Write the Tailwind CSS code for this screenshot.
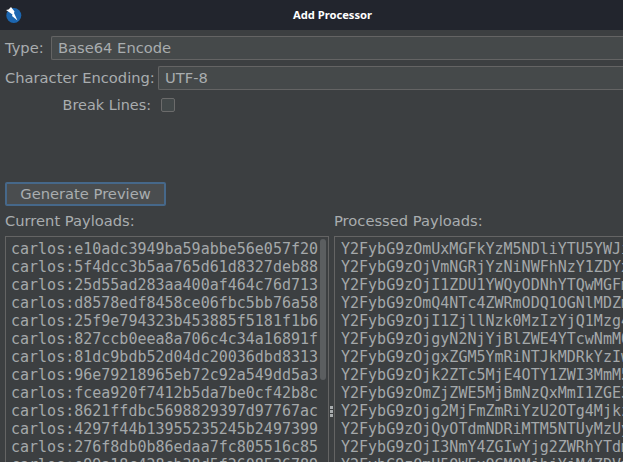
<!DOCTYPE html>
<html lang="en">
<head>
    <meta charset="UTF-8">
    <title>Add Processor</title>
    <script src="https://cdn.jsdelivr.net/npm/@tailwindcss/browser@4"></script>
</head>
<body class="relative bg-[#3c3f41] w-[623px] h-[462px] overflow-hidden font-['DejaVu_Sans',sans-serif] text-[14.7px] text-[#a9adaf]">
    <!-- title bar -->
    <div class="relative h-[30px] bg-[#22252d] flex items-center justify-center pl-[42px]">
        <svg class="absolute left-[6px] top-[7px]" width="16" height="16" viewBox="6 7 16 16">
            <circle cx="13.8" cy="15.5" r="7.5" fill="#1c66b0"/>
            <path d="M11 7 L14.5 11.5 L14 13 L17.5 20.5 L12 16 L12.5 14.5 L6 10 L8.5 9.5 Z" fill="#fff"/>
        </svg>
        <span class="font-['Noto_Sans',sans-serif] font-bold text-[11.2px] text-white">Add Processor</span>
    </div>

    <div class="pl-[5px]">
        <div class="flex items-center h-[24px] mt-[6px] whitespace-nowrap">
            <span class="w-[46px] shrink-0">Type:</span>
            <div class="flex-1 h-full bg-[#45494a] border border-r-0 border-[#646464] rounded-l-[2px] px-[6px] flex items-center">Base64 Encode</div>
        </div>
        <div class="flex items-center h-[24px] mt-[6px] whitespace-nowrap">
            <span class="w-[153px] shrink-0">Character Encoding:</span>
            <div class="flex-1 h-full bg-[#45494a] border border-r-0 border-[#646464] rounded-l-[2px] px-[6px] flex items-center">UTF-8</div>
        </div>
        <div class="flex items-center h-[14px] mt-[8px] whitespace-nowrap">
            <span class="w-[146px] shrink-0 pt-[2px] text-right text-[14.4px]">Break Lines:</span>
            <div class="ml-[10px] w-[14px] h-[14px] bg-[#43494a] border border-[#6b6b6b] rounded-[2px]"></div>
        </div>

        <button class="mt-[70px] w-[161px] h-[24px] leading-[18px] block bg-[#4a4d4f] border-2 border-[#46688a] rounded-[2px] text-[#a9adaf]">Generate Preview</button>

        <div class="grid grid-cols-[324px_1fr] gap-x-[5px] mt-[6px]">
            <div class="h-[18px] leading-[18px]">Current Payloads:</div>
            <div class="h-[18px] leading-[18px] whitespace-nowrap">Processed Payloads:</div>

            <div class="relative mt-[6px] h-[226px] border border-b-0 border-[#646464] pl-[5px] pt-[3px] font-['DejaVu_Sans_Mono',monospace] text-[15px] leading-[18px] text-[#a4a8aa] overflow-hidden whitespace-nowrap">
                <div>carlos:e10adc3949ba59abbe56e057f20</div>
                <div>carlos:5f4dcc3b5aa765d61d8327deb88</div>
                <div>carlos:25d55ad283aa400af464c76d713</div>
                <div>carlos:d8578edf8458ce06fbc5bb76a58</div>
                <div>carlos:25f9e794323b453885f5181f1b6</div>
                <div>carlos:827ccb0eea8a706c4c34a16891f</div>
                <div>carlos:81dc9bdb52d04dc20036dbd8313</div>
                <div>carlos:96e79218965eb72c92a549dd5a3</div>
                <div>carlos:fcea920f7412b5da7be0cf42b8c</div>
                <div>carlos:8621ffdbc5698829397d97767ac</div>
                <div>carlos:4297f44b13955235245b2497399</div>
                <div>carlos:276f8db0b86edaa7fc805516c85</div>
                <div>carlos:e99a18c428cb38d5f2608536789</div>
                <div class="absolute right-[2px] top-[2px] w-[6px] h-[141px] rounded-[3px] bg-[#5b5e60]"></div>
            </div>

            <div class="relative mt-[6px] h-[226px] border border-b-0 border-r-0 border-[#646464] pl-[6px] pt-[3px] font-['DejaVu_Sans_Mono',monospace] text-[15px] leading-[18px] text-[#a4a8aa] overflow-hidden whitespace-nowrap">
                <div>Y2FybG9zOmUxMGFkYzM5NDliYTU5YWJi</div>
                <div>Y2FybG9zOjVmNGRjYzNiNWFhNzY1ZDYx</div>
                <div>Y2FybG9zOjI1ZDU1YWQyODNhYTQwMGFm</div>
                <div>Y2FybG9zOmQ4NTc4ZWRmODQ1OGNlMDZm</div>
                <div>Y2FybG9zOjI1ZjllNzk0MzIzYjQ1Mzg4</div>
                <div>Y2FybG9zOjgyN2NjYjBlZWE4YTcwNmM0</div>
                <div>Y2FybG9zOjgxZGM5YmRiNTJkMDRkYzIw</div>
                <div>Y2FybG9zOjk2ZTc5MjE4OTY1ZWI3MmM5</div>
                <div>Y2FybG9zOmZjZWE5MjBmNzQxMmI1ZGE3</div>
                <div>Y2FybG9zOjg2MjFmZmRiYzU2OTg4Mjkz</div>
                <div>Y2FybG9zOjQyOTdmNDRiMTM5NTUyMzUy</div>
                <div>Y2FybG9zOjI3NmY4ZGIwYjg2ZWRhYTdm</div>
                <div>Y2FybG9zOmU5OWExOGM0MjhjYjM4ZDVm</div>
            </div>
        </div>
    </div>

    <!-- splitter grip -->
    <div class="absolute left-[330px] top-[406px] flex flex-col gap-[1px]">
        <div class="w-[3px] h-[3px] bg-[#a9adaf]"></div>
        <div class="w-[3px] h-[3px] bg-[#a9adaf]"></div>
        <div class="w-[3px] h-[3px] bg-[#a9adaf]"></div>
    </div>
</body>
</html>
